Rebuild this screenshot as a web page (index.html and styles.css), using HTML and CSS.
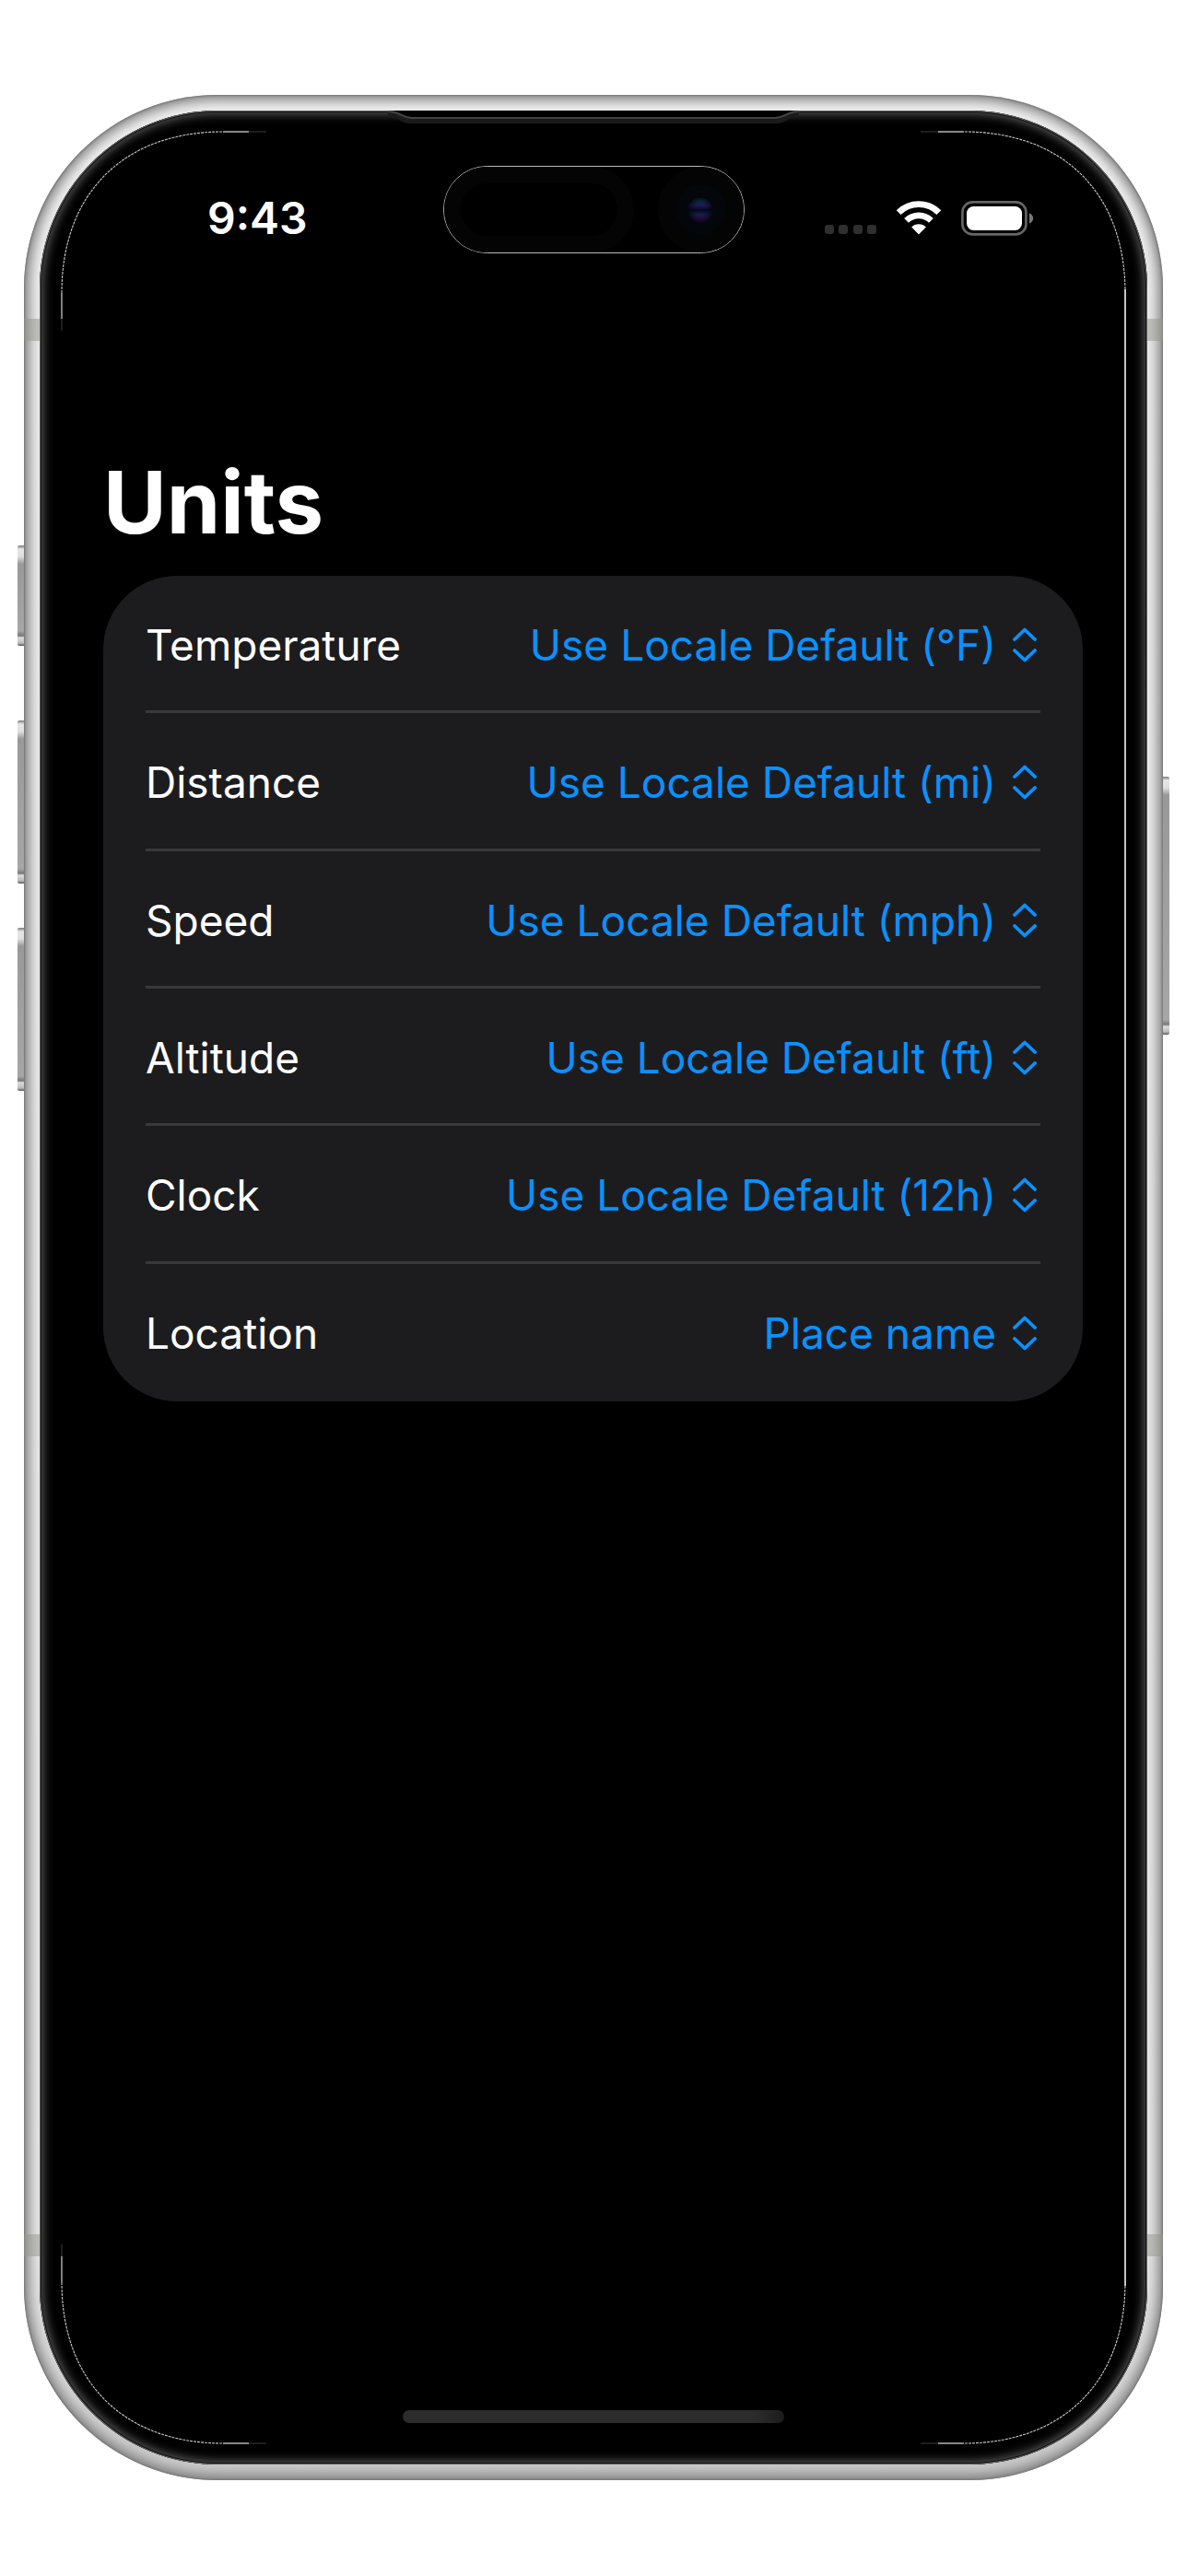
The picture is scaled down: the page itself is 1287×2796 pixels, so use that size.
FILE: index.html
```html
<!DOCTYPE html>
<html lang="en">

<head>
    <meta charset="UTF-8">
    <meta name="viewport" content="width=device-width, initial-scale=1.0">
    <title>Units</title>
    <link rel="stylesheet" href="styles.css">
</head>

<body>
    <!-- shared shapes -->
    <svg class="shapes" width="0" height="0" aria-hidden="true">
        <symbol id="chevrons" viewBox="0 0 26 38">
            <path d="M2 13 L13 2.5 L24 13 M2 25 L13 35.5 L24 25" fill="none" stroke="#0a91ff" stroke-width="3.8" stroke-linecap="round" stroke-linejoin="round" />
        </symbol>
        <symbol id="corner" viewBox="0 0 226 226">
            <path d="M1 176 C1 68 68 1 176 1" fill="none" stroke="#c8c8c8" stroke-width="1.1" stroke-dasharray="3 1" />
            <path d="M176 1 H204 M1 176 V204" stroke="#b4b4b4" stroke-width="1.4" />
            <path d="M204 1 H223 M1 204 V217" stroke="#3c3c3c" stroke-width="1" />
        </symbol>
    </svg>

    <div class="phone">
        <span class="side_btn action"></span>
        <span class="side_btn volume_up"></span>
        <span class="side_btn volume_down"></span>
        <span class="side_btn power"></span>
        <span class="band band_top"></span>
        <span class="band band_bottom"></span>

        <div class="bezel">
            <svg class="speaker" viewBox="0 0 446 16" aria-hidden="true">
                <path d="M0 0 C14 0 14 7 26 7 H420 C432 7 432 0 446 0 V5 C436 5 434 14 422 14 H24 C12 14 10 5 0 5 Z" fill="#1b1b1b" />
                <path d="M0 0 H446 C432 0 432 7 420 7 H26 C14 7 14 0 0 0 Z" fill="#000" />
                <path d="M0 1 C14 1 14 8 26 8 H420 C432 8 432 1 446 1" fill="none" stroke="#444" stroke-width="2" />
            </svg>

            <div class="screen">
                <svg class="corner top_left" aria-hidden="true"><use href="#corner" /></svg>
                <svg class="corner top_right" aria-hidden="true"><use href="#corner" /></svg>
                <svg class="corner bottom_left" aria-hidden="true"><use href="#corner" /></svg>
                <svg class="corner bottom_right" aria-hidden="true"><use href="#corner" /></svg>
                <span class="edge_line"></span>

                <header class="status_bar">
                    <time class="clock">9:43</time>
                    <div class="island">
                        <span class="sensor"></span>
                        <span class="camera"><span class="lens"></span></span>
                    </div>
                    <div class="status_icons">
                        <svg width="56" height="38" viewBox="0 0 56 38" fill="#2f2f2f" aria-hidden="true">
                            <rect x="0" y="26" width="10" height="10" rx="3" />
                            <rect x="15" y="26" width="10" height="10" rx="3" />
                            <rect x="31" y="26" width="10" height="10" rx="3" />
                            <rect x="46" y="26" width="10" height="10" rx="3" />
                        </svg>
                        <svg width="48" height="38" viewBox="0 0 48 38" aria-hidden="true">
                            <g fill="none" stroke="#fff" stroke-width="6.8">
                                <path d="M2.2 12.6 A31 31 0 0 1 45.8 12.6" />
                                <path d="M10.6 21.4 A19 19 0 0 1 37.4 21.4" />
                            </g>
                            <path d="M24 36.5 L16.2 28.6 A11 11 0 0 1 31.8 28.6 Z" fill="#fff" />
                        </svg>
                        <svg width="80" height="38" viewBox="0 0 80 38" aria-hidden="true">
                            <rect x="1.4" y="1.4" width="69" height="35" rx="11" fill="none" stroke="#666" stroke-width="2.6" />
                            <rect x="6" y="6" width="60" height="26" rx="7.5" fill="#fff" />
                            <path d="M74 13.5 C79.5 15 79.5 23 74 24.5 Z" fill="#777" />
                        </svg>
                    </div>
                </header>

                <main class="content">
                    <h1 class="title">Units</h1>
                    <form class="unit_list">
                        <div class="unit_row">
                            <label for="temperature">Temperature</label>
                            <select id="temperature">
                                <option>Use Locale Default (°F)</option>
                            </select>
                            <svg class="chevrons" aria-hidden="true"><use href="#chevrons" /></svg>
                        </div>
                        <div class="unit_row">
                            <label for="distance">Distance</label>
                            <select id="distance">
                                <option>Use Locale Default (mi)</option>
                            </select>
                            <svg class="chevrons" aria-hidden="true"><use href="#chevrons" /></svg>
                        </div>
                        <div class="unit_row">
                            <label for="speed">Speed</label>
                            <select id="speed">
                                <option>Use Locale Default (mph)</option>
                            </select>
                            <svg class="chevrons" aria-hidden="true"><use href="#chevrons" /></svg>
                        </div>
                        <div class="unit_row">
                            <label for="altitude">Altitude</label>
                            <select id="altitude">
                                <option>Use Locale Default (ft)</option>
                            </select>
                            <svg class="chevrons" aria-hidden="true"><use href="#chevrons" /></svg>
                        </div>
                        <div class="unit_row">
                            <label for="clock">Clock</label>
                            <select id="clock">
                                <option>Use Locale Default (12h)</option>
                            </select>
                            <svg class="chevrons" aria-hidden="true"><use href="#chevrons" /></svg>
                        </div>
                        <div class="unit_row">
                            <label for="location">Location</label>
                            <select id="location">
                                <option>Place name</option>
                            </select>
                            <svg class="chevrons" aria-hidden="true"><use href="#chevrons" /></svg>
                        </div>
                    </form>
                </main>

                <div class="home_bar"></div>
            </div>
        </div>
    </div>
</body>

</html>
```
FILE: styles.css
```css
* {
    box-sizing: border-box;
}

body {
    margin: 0;
    padding: 103px 25px 104px 26px;
    min-height: 100vh;
    display: flex;
    background: #fff;
    color: #fff;
    font-family: Inter, "Liberation Sans", sans-serif;
    font-size: 46px;
}

.shapes {
    position: absolute;
}

/* phone body */
.phone {
    position: relative;
    flex: 1;
    display: flex;
    padding: 17px;
    border-radius: 210px;
    background: linear-gradient(#f0f0f0, #ececec 10%, #e8e8e8 90%, #c8c8c8);
    box-shadow: inset 0 0 2px 1px #777, inset 0 0 14px 5px #777;
}

.bezel {
    position: relative;
    flex: 1;
    display: flex;
    padding: 22px 23px;
    border-radius: 193px;
    background: #000;
    box-shadow: inset 0 0 0 1px #666, inset 0 0 0 2px #111, inset 0 0 12px 3px #666;
}

.speaker {
    position: absolute;
    top: 0;
    left: 50%;
    width: 446px;
    height: 16px;
    margin-left: -223px;
}

.side_btn {
    position: absolute;
    left: -7px;
    width: 7px;
    border-radius: 2px 0 0 2px;
    background: linear-gradient(#777 0, #e6e6e6 4px, #e0e0e0 12px, #999 20px, #a6a6a6 calc(100% - 16px), #777 calc(100% - 11px), #ddd calc(100% - 9px), #bbb calc(100% - 3px), #555 100%);
}

.action {
    top: 489px;
    height: 109px;
}

.volume_up {
    top: 679px;
    height: 177px;
}

.volume_down {
    top: 904px;
    height: 177px;
}

.power {
    top: 740px;
    left: auto;
    right: -7px;
    height: 280px;
    border-radius: 0 2px 2px 0;
}

.band {
    position: absolute;
    left: 0;
    right: 0;
    height: 24px;
    background: rgba(150, 150, 140, 0.5);
}

.band_top {
    top: 243px;
}

.band_bottom {
    bottom: 243px;
}

/* screen */
.screen {
    position: relative;
    flex: 1;
    display: flex;
    flex-direction: column;
    padding: 38px 0 23px;
}

.corner {
    position: absolute;
    width: 226px;
    height: 226px;
}

.top_left {
    top: 0;
    left: 0;
}

.top_right {
    top: 0;
    right: 0;
    transform: scaleX(-1);
}

.bottom_left {
    bottom: 0;
    left: 0;
    transform: scaleY(-1);
}

.bottom_right {
    bottom: 0;
    right: 0;
    transform: scale(-1);
}

.edge_line {
    position: absolute;
    top: 172px;
    bottom: 172px;
    right: 0;
    width: 2px;
    background: #c4c4c4;
}

.status_bar {
    display: grid;
    grid-template-columns: 1fr 327px 1fr;
    align-items: center;
    height: 95px;
}

.clock {
    padding: 18px 0 0 12px;
    text-align: center;
    font-size: 48px;
    font-weight: 600;
}

.island {
    display: flex;
    justify-content: space-between;
    height: 95px;
    border: 1px solid #bbb;
    border-radius: 48px;
}

.sensor {
    width: 206px;
    border: 18px solid #040404;
    border-radius: 48px;
}

.camera {
    display: flex;
    align-items: center;
    justify-content: center;
    width: 93px;
    border-radius: 50%;
    background: radial-gradient(circle, #03070b 0 26px, #040404 27px);
}

.lens {
    width: 26px;
    height: 26px;
    border-radius: 50%;
    background: linear-gradient(#123a4c 10%, #241a60 30%, #070722 50%, #15224a 70%, #3a0a5a 90%);
    box-shadow: inset 0 0 6px 2px #05050c;
}

.status_icons {
    display: flex;
    gap: 22px;
    padding: 18px 0 0 87px;
}

.content {
    padding: 0 47px 0 46px;
}

.title {
    margin: 210px 0 0;
    font-size: 94px;
    line-height: 120px;
    font-weight: 700;
}

.unit_list {
    display: flex;
    flex-direction: column;
    height: 896px;
    margin-top: 20px;
    padding: 0 46px;
    border-radius: 80px;
    background: #1c1c1e;
}

.unit_row {
    flex: 1;
    display: flex;
    align-items: center;
    padding-top: 4px;
    border-bottom: 3px solid #39393b;
}

.unit_row:last-child {
    border-bottom-color: transparent;
}

.unit_row select {
    flex: 1;
    min-width: 0;
    padding: 0;
    border: 0;
    outline: none;
    background: none;
    color: #0a91ff;
    font: inherit;
    text-align: right;
    text-align-last: right;
    appearance: none;
    cursor: pointer;
}

.chevrons {
    width: 26px;
    height: 38px;
    margin: 0 4px 0 18px;
}

.home_bar {
    align-self: center;
    width: 414px;
    height: 14px;
    margin-top: auto;
    border-radius: 7px;
    background: linear-gradient(90deg, #2c2c2c 92%, #1c1c1c);
}
```
